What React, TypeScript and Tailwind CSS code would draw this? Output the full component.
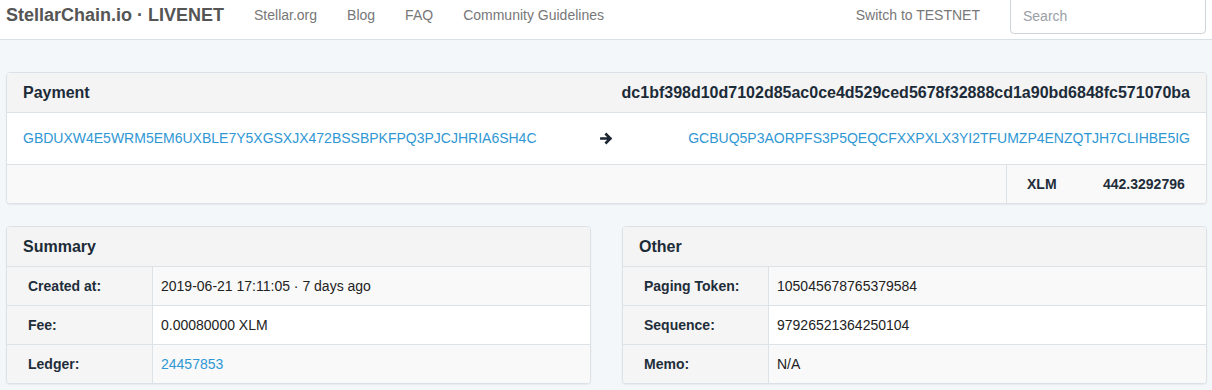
import React from "react";

const font = { fontFamily: '"Liberation Sans", Arial, sans-serif' };

function Arrow() {
  return (
    <svg width="13" height="13" viewBox="0 0 14 14" className="-ml-[1px]">
      <path d="M1.5 7h9.5M6.8 2.6L11.2 7l-4.4 4.4" fill="none" stroke="#1c2632" strokeWidth="2.8" strokeLinecap="square" />
    </svg>
  );
}

function Row({ label, value, striped, link }: { label: string; value: string; striped?: boolean; link?: boolean }) {
  return (
    <div className="flex h-[39px] border-t border-[#dde2e6] text-[14px]">
      <div className="w-[146px] shrink-0 flex items-center pl-[21px] font-bold text-[#1f2d3a] bg-[#f5f5f5] border-r border-[#dde2e6]">
        {label}
      </div>
      <div className={"flex-1 flex items-center pl-[8px] " + (striped ? "bg-[#f9f9f9]" : "bg-white")}>
        <span className={link ? "text-[#2f97d4]" : "text-[#222]"}>{value}</span>
      </div>
    </div>
  );
}

function Panel({ title, rows }: { title: string; rows: { label: string; value: string; link?: boolean }[] }) {
  return (
    <div className="rounded-[4px] border border-[#dbe1e6] bg-white shadow-[0_1px_2px_rgba(0,0,0,0.06)] overflow-hidden">
      <div className="h-[39px] flex items-center px-[16px] bg-[#f4f4f4] text-[16px] font-bold text-[#1c2b38]">{title}</div>
      {rows.map((r, i) => (
        <Row key={r.label} label={r.label} value={r.value} link={r.link} striped={i % 2 === 0} />
      ))}
    </div>
  );
}

export default function App() {
  return (
    <div className="min-h-[390px] bg-[#f3f7fa]" style={font}>
      <nav className="h-[40px] bg-white border-b border-[#d6e1e8] flex items-center px-[6px]">
        <span className="text-[18px] font-bold text-[#555] -mt-[8px]">StellarChain.io · LIVENET</span>
        <div className="flex ml-[30px] text-[14px] text-[#777] -mt-[8px]">
          <span>Stellar.org</span>
          <span className="ml-[30px]">Blog</span>
          <span className="ml-[30px]">FAQ</span>
          <span className="ml-[30px]">Community Guidelines</span>
        </div>
        <span className="ml-auto mr-[30px] text-[14px] text-[#777] -mt-[8px]">Switch to TESTNET</span>
        <div className="w-[196px] h-[37px] -mt-[9px] border border-[#ccd3d9] rounded-[4px] flex items-center px-[12px] pt-[2px] text-[14px] text-[#9aa0a6] bg-white">
          Search
        </div>
      </nav>

      <div className="px-[6px] pt-[32px] pr-[5px]">
        <div className="rounded-[4px] border border-[#dbe1e6] bg-white shadow-[0_1px_2px_rgba(0,0,0,0.06)] overflow-hidden">
          <div className="h-[39px] flex items-center justify-between px-[16px] bg-[#f4f4f4] text-[16px] font-bold text-[#1c2b38]">
            <span>Payment</span>
            <span>dc1bf398d10d7102d85ac0ce4d529ced5678f32888cd1a90bd6848fc571070ba</span>
          </div>
          <div className="h-[52px] border-t border-[#dde2e6] grid grid-cols-[1fr_auto_1fr] items-center px-[16px] text-[14px] text-[#2f97d4]">
            <span>GBDUXW4E5WRM5EM6UXBLE7Y5XGSXJX472BSSBPKFPQ3PJCJHRIA6SH4C</span>
            <Arrow />
            <span className="text-right">GCBUQ5P3AORPFS3P5QEQCFXXPXLX3YI2TFUMZP4ENZQTJH7CLIHBE5IG</span>
          </div>
          <div className="h-[39px] border-t border-[#dde2e6] flex bg-[#f9f9f9] text-[14px] font-bold text-[#1f2d3a]">
            <div className="flex-1" />
            <div className="w-[200px] border-l border-[#dde2e6] flex items-center pl-[20px]">
              <span className="w-[76px]">XLM</span>
              <span>442.3292796</span>
            </div>
          </div>
        </div>

        <div className="grid grid-cols-2 gap-[31px] mt-[22px]">
          <Panel
            title="Summary"
            rows={[
              { label: "Created at:", value: "2019-06-21 17:11:05 · 7 days ago" },
              { label: "Fee:", value: "0.00080000 XLM" },
              { label: "Ledger:", value: "24457853", link: true },
            ]}
          />
          <Panel
            title="Other"
            rows={[
              { label: "Paging Token:", value: "105045678765379584" },
              { label: "Sequence:", value: "97926521364250104" },
              { label: "Memo:", value: "N/A" },
            ]}
          />
        </div>
      </div>
    </div>
  );
}
